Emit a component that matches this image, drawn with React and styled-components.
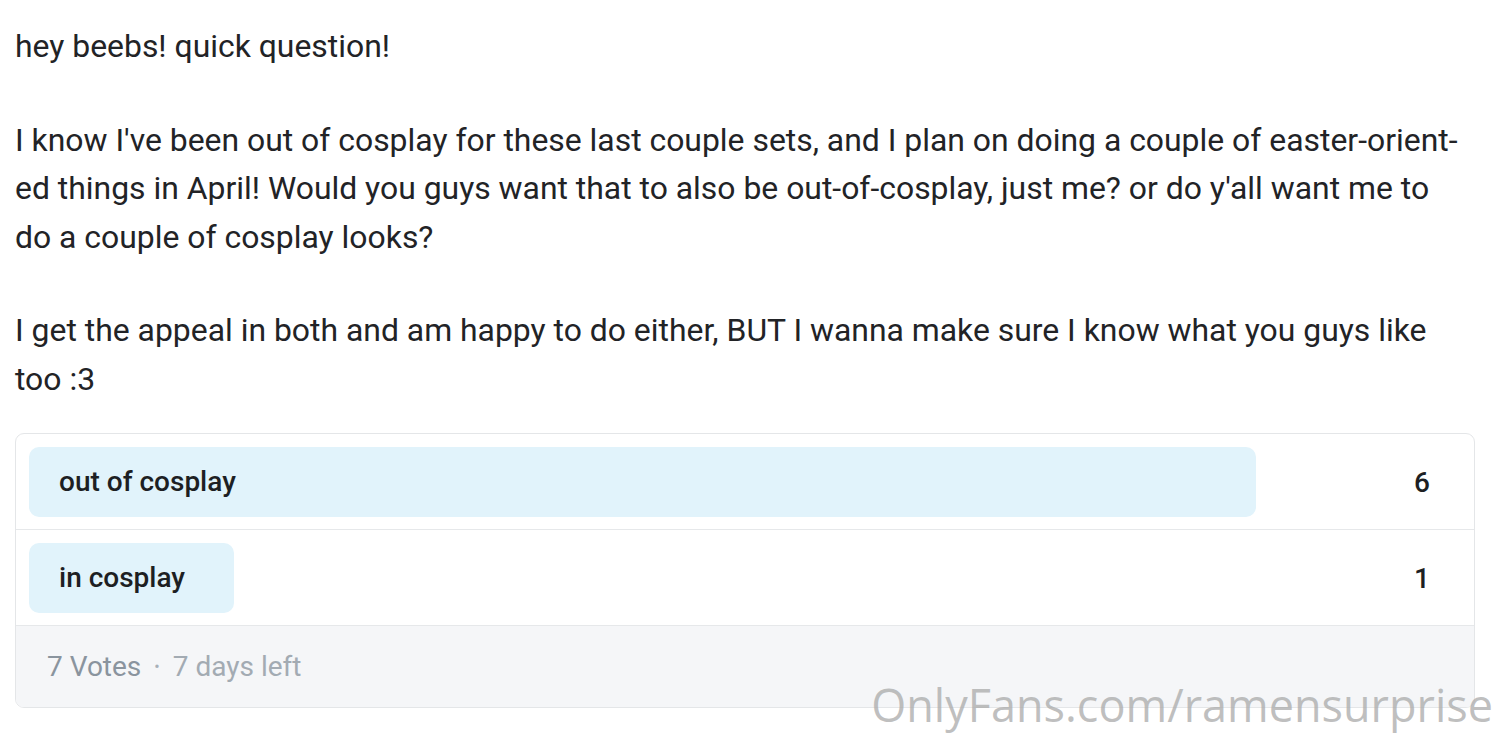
import React from 'react';
import styled, { createGlobalStyle } from 'styled-components';

const Global = createGlobalStyle`
    html, body {
        margin: 0;
        padding: 0;
        background: #ffffff;
    }
    body {
        font-family: Roboto, 'Liberation Sans', sans-serif;
        color: #222326;
        overflow: hidden;
    }
`;

const options = [
    { label: 'out of cosplay', votes: 6 },
    { label: 'in cosplay', votes: 1 },
];

const App = () => {
    const total = options.reduce((sum, o) => sum + o.votes, 0);

    return (
        <S.Page>
            <Global />
            <S.Post>
                <S.Para>hey beebs! quick question!</S.Para>
                <S.Para>
                    I know I've been out of cosplay for these last couple sets, and I plan on doing a couple of easter-orient&shy;ed things in April! Would you guys want that to also be out-of-cosplay, just me? or do y'all want me to do a couple of cosplay looks?
                </S.Para>
                <S.Para>
                    I get the appeal in both and am happy to do either, BUT I wanna make sure I know what you guys like too :3
                </S.Para>
            </S.Post>

            <S.Poll>
                {options.map((o) => (
                    <S.Option key={o.label}>
                        <S.Track>
                            <S.Fill style={{ width: `${(o.votes / total) * 100}%` }} />
                            <S.Label>{o.label}</S.Label>
                        </S.Track>
                        <S.Count>{o.votes}</S.Count>
                    </S.Option>
                ))}
                <S.Footer>
                    <span>{total} Votes</span>
                    <S.Dot>•</S.Dot>
                    <S.Left>7 days left</S.Left>
                </S.Footer>
            </S.Poll>

            <S.Watermark>OnlyFans.com/ramensurprise</S.Watermark>
        </S.Page>
    );
};

const S = {
    Page: styled.div`
        position: relative;
        width: 1500px;
        height: 736px;
        padding: 22px 15px 0 15px;
        box-sizing: border-box;
    `,
    Post: styled.div`
        width: 1450px;
        font-size: 31.9px;
        line-height: 48.5px;
    `,
    Para: styled.p`
        margin: 0 0 45px 0;
        &:last-child {
            margin-bottom: 0;
        }
    `,
    Poll: styled.div`
        margin-top: 30px;
        width: 1460px;
        border: 1.5px solid #e4e6e8;
        border-radius: 9px;
        overflow: hidden;
        box-sizing: border-box;
    `,
    Option: styled.div`
        position: relative;
        display: flex;
        align-items: center;
        height: 96px;
        padding: 13px;
        box-sizing: border-box;
        border-bottom: 1.5px solid #e6e8ea;
    `,
    Track: styled.div`
        position: relative;
        flex: 1;
        height: 70px;
        display: flex;
        align-items: center;
    `,
    Fill: styled.div`
        position: absolute;
        left: 0;
        top: 0;
        bottom: 0;
        background: #e1f3fb;
        border-radius: 10px;
    `,
    Label: styled.span`
        position: relative;
        padding-left: 30px;
        font-size: 28px;
        font-weight: 500;
        color: #1d1f23;
    `,
    Count: styled.span`
        position: absolute;
        right: 44px;
        top: 50%;
        transform: translateY(-50%);
        font-size: 28px;
        font-weight: 500;
        color: #1d1f23;
    `,
    Footer: styled.div`
        display: flex;
        align-items: center;
        gap: 13px;
        height: 81px;
        padding-left: 31px;
        background: #f5f6f8;
        font-size: 28px;
        color: #8a949e;
    `,
    Dot: styled.span`
        font-size: 16px;
        color: #a8b0b8;
    `,
    Left: styled.span`
        color: #a3abb3;
    `,
    Watermark: styled.div`
        position: absolute;
        right: 7px;
        bottom: 1px;
        font-family: 'Open Sans', 'Noto Sans', sans-serif;
        font-size: 45px;
        font-weight: 400;
        color: rgba(170, 170, 170, 0.75);
        pointer-events: none;
    `,
};

export default App;
